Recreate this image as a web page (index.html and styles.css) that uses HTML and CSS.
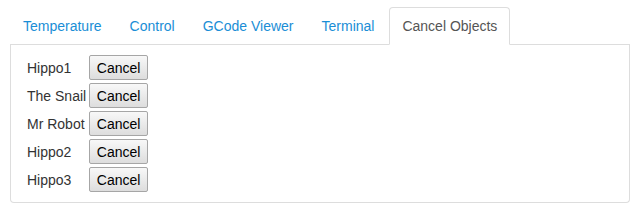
FILE: index.html
```html
<!DOCTYPE html>
<html lang="en">
  <head>
    <meta charset="UTF-8" />
    <title>Cancel Objects</title>
    <link rel="stylesheet" href="styles.css">
  </head>
  <body>
    <div class="wrap">
      <ul class="nav-tabs">
        <li><a href="#">Temperature</a></li>
        <li><a href="#">Control</a></li>
        <li><a href="#">GCode Viewer</a></li>
        <li><a href="#">Terminal</a></li>
        <li class="active"><a href="#">Cancel Objects</a></li>
      </ul>
      <div class="tab-content">
        <div class="object-list">
          <span class="obj-name">Hippo1</span>
          <button class="cancel-btn">Cancel</button>
          <span class="obj-name">The Snail</span>
          <button class="cancel-btn">Cancel</button>
          <span class="obj-name">Mr Robot</span>
          <button class="cancel-btn">Cancel</button>
          <span class="obj-name">Hippo2</span>
          <button class="cancel-btn">Cancel</button>
          <span class="obj-name">Hippo3</span>
          <button class="cancel-btn">Cancel</button>
        </div>
      </div>
    </div>
  </body>
</html>
```

FILE: styles.css
```css
html,
body {
  margin: 0;
  padding: 0;
  background: #fff;
  font-family: "Liberation Sans", Arial, sans-serif;
  font-size: 14px;
  line-height: 20px;
  color: #333;
}
.wrap {
  width: 620px;
  padding: 7px 8px 10px 10px;
}
.nav-tabs {
  display: flex;
  list-style: none;
  margin: 0;
  padding: 0;
  border-bottom: 1px solid #ddd;
}
.nav-tabs li {
  margin-right: 2px;
  margin-bottom: -1px;
}
.nav-tabs a {
  display: block;
  padding: 8px 12px;
  border: 1px solid transparent;
  border-radius: 4px 4px 0 0;
  color: #1a8ed6;
  text-decoration: none;
}
.nav-tabs .active a {
  color: #555;
  background: #fff;
  border-color: #ddd;
  border-bottom-color: #fff;
}
.tab-content {
  border: 1px solid #ddd;
  border-top: none;
  border-radius: 0 0 4px 4px;
  padding: 10px 16px 10px 16px;
}
.object-list {
  display: grid;
  grid-template-columns: max-content max-content;
  column-gap: 3px;
  row-gap: 3px;
  align-items: center;
}
.cancel-btn {
  height: 25px;
  width: 59px;
  padding: 0;
  font-family: "Liberation Sans", Arial, sans-serif;
  font-size: 14px;
  color: #000;
  background: linear-gradient(#f8f8f8, #dddddd);
  border: 1px solid #a6a6a6;
  border-radius: 2px;
}
```
